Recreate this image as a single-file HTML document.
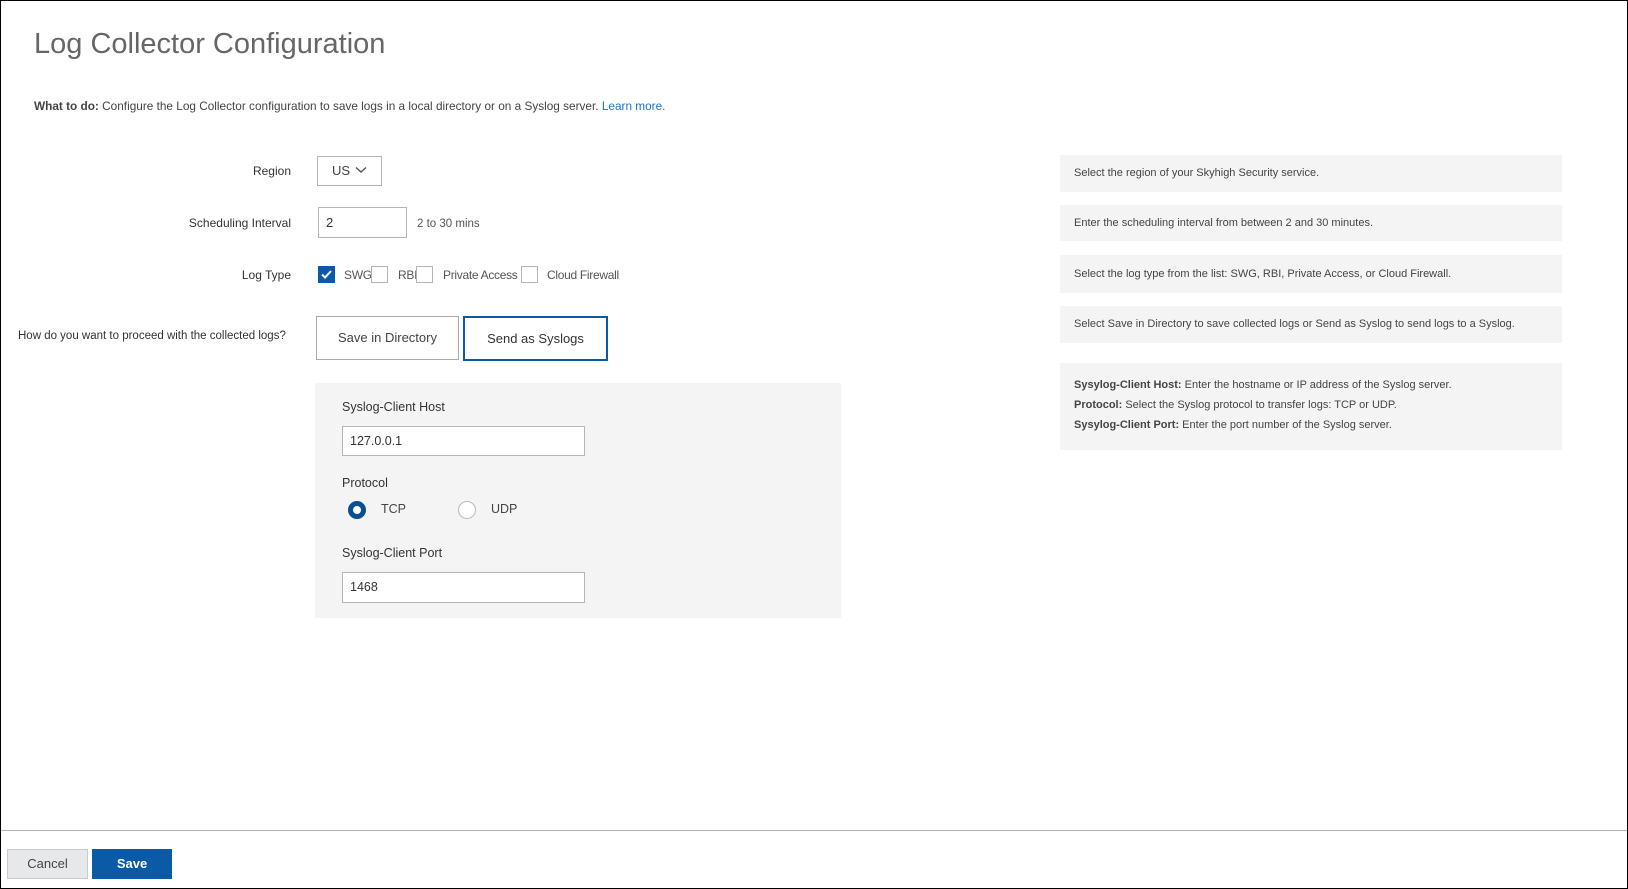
<!DOCTYPE html>
<html><head><style>
*{box-sizing:border-box;margin:0;padding:0}
body{width:1628px;height:889px;position:relative;background:#fff;font-family:"Liberation Sans",sans-serif;color:#333;overflow:hidden}
.frame{position:absolute;left:0;top:0;width:1628px;height:889px;border:1px solid #000}
.a{position:absolute;white-space:nowrap}
.lbl{font-size:12px;color:#333;text-align:right;width:300px}
.box{position:absolute;border:1px solid #b5b5b5;background:#fff}
.help{position:absolute;left:1060px;width:502px;background:#f4f4f4;font-size:11px;color:#444;padding-left:14px}
.cb{position:absolute;width:17px;height:17px;border:1px solid #b5b5b5;background:#fff;top:266px}
.ct{font-size:12px;color:#555;letter-spacing:-0.3px;top:268px}
</style></head><body>
<div class="frame"></div>
<div class="a" style="left:34px;top:28px;font-size:29px;color:#666;font-weight:300">Log Collector Configuration</div>
<div class="a" style="left:34px;top:99px;font-size:11.8px;color:#444"><b>What to do:</b> Configure the Log Collector configuration to save logs in a local directory or on a Syslog server. <span style="color:#1a73c8">Learn more.</span></div>

<div class="a lbl" style="left:-9px;top:164px">Region</div>
<div class="box" style="left:317px;top:156px;width:65px;height:30px"></div>
<div class="a" style="left:332px;top:163px;font-size:13px;color:#444">US</div>
<svg class="a" style="left:355px;top:166px" width="12" height="8"><path d="M1 1.5L6 6 11 1.5" stroke="#555" stroke-width="1.4" fill="none"/></svg>

<div class="a lbl" style="left:-9px;top:216px">Scheduling Interval</div>
<div class="box" style="left:318px;top:207px;width:89px;height:31px"></div>
<div class="a" style="left:326px;top:215px;font-size:13px;color:#333">2</div>
<div class="a" style="left:417px;top:218px;font-size:11.5px;color:#555">2 to 30 mins</div>

<div class="a lbl" style="left:-9px;top:268px">Log Type</div>
<div class="cb" style="left:318px;background:#0b5aa6;border-color:#0b5aa6"><svg width="15" height="15" style="position:absolute;left:0;top:0"><path d="M3 7.5L6 10.5 12 4" stroke="#fff" stroke-width="2" fill="none"/></svg></div>
<div class="a ct" style="left:344px">SWG</div>
<div class="cb" style="left:371px"></div>
<div class="a ct" style="left:398px">RBI</div>
<div class="cb" style="left:416px"></div>
<div class="a ct" style="left:443px">Private Access</div>
<div class="cb" style="left:521px"></div>
<div class="a ct" style="left:547px">Cloud Firewall</div>

<div class="a" style="left:18px;top:330px;font-size:11.5px;color:#333">How do you want to proceed with the collected logs?</div>
<div class="box" style="left:316px;top:316px;width:143px;height:44px;border-color:#aaa;font-size:13px;color:#444;text-align:center;line-height:42px">Save in Directory</div>
<div class="box" style="left:463px;top:316px;width:145px;height:45px;border:2px solid #0b5aa6;font-size:13px;color:#333;text-align:center;line-height:41px">Send as Syslogs</div>

<div class="a" style="left:315px;top:383px;width:526px;height:235px;background:#f4f4f4"></div>
<div class="a" style="left:342px;top:400px;font-size:12.5px;color:#333">Syslog-Client Host</div>
<div class="box" style="left:342px;top:426px;width:243px;height:30px"></div>
<div class="a" style="left:350px;top:434px;font-size:12.5px;color:#333">127.0.0.1</div>
<div class="a" style="left:342px;top:476px;font-size:12.5px;color:#333">Protocol</div>
<div class="a" style="left:348px;top:501px;width:18px;height:18px;border-radius:50%;border:5px solid #0b4f93;background:#fff"></div>
<div class="a" style="left:381px;top:502px;font-size:12.5px;color:#444">TCP</div>
<div class="a" style="left:458px;top:501px;width:18px;height:18px;border-radius:50%;border:1px solid #bbb;background:#fff"></div>
<div class="a" style="left:491px;top:502px;font-size:12.5px;color:#444">UDP</div>
<div class="a" style="left:342px;top:546px;font-size:12.5px;color:#333">Syslog-Client Port</div>
<div class="box" style="left:342px;top:572px;width:243px;height:31px"></div>
<div class="a" style="left:350px;top:580px;font-size:12.5px;color:#333">1468</div>

<div class="help" style="top:155px;height:37px;line-height:37px">Select the region of your Skyhigh Security service.</div>
<div class="help" style="top:205px;height:36px;line-height:36px">Enter the scheduling interval from between 2 and 30 minutes.</div>
<div class="help" style="top:255px;height:38px;line-height:38px">Select the log type from the list: SWG, RBI, Private Access, or Cloud Firewall.</div>
<div class="help" style="top:306px;height:37px;line-height:37px">Select Save in Directory to save collected logs or Send as Syslog to send logs to a Syslog.</div>
<div class="help" style="top:363px;height:87px;padding-top:12px;line-height:20px"><b>Sysylog-Client Host:</b> Enter the hostname or IP address of the Syslog server.<br><b>Protocol:</b> Select the Syslog protocol to transfer logs: TCP or UDP.<br><b>Sysylog-Client Port:</b> Enter the port number of the Syslog server.</div>

<div class="a" style="left:1px;top:830px;width:1626px;height:1px;background:#b0b5ba"></div>
<div class="a" style="left:7px;top:849px;width:81px;height:30px;background:#e6e8ea;border:1px solid #c8cacc;font-size:13px;color:#444;text-align:center;line-height:28px">Cancel</div>
<div class="a" style="left:92px;top:849px;width:80px;height:30px;background:#0b5aa6;font-size:13px;color:#fff;font-weight:bold;text-align:center;line-height:30px">Save</div>
</body></html>
